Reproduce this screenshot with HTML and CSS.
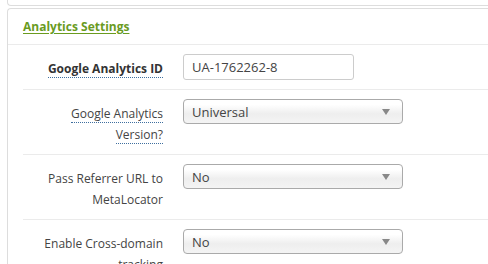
FILE: index.html
```html
<!DOCTYPE html>
<html lang="en">
<head>
  <meta charset="UTF-8">
  <title>Analytics Settings</title>
  <link rel="stylesheet" href="styles.css">
</head>
<body>
  <div class="panel-prev"></div>

  <div class="panel">
    <div class="panel-heading">
      <a class="panel-title" href="#">Analytics Settings</a>
    </div>

    <div class="panel-body">
      <div class="form-row">
        <label class="form-label"><span class="hint strong">Google Analytics ID</span></label>
        <div class="form-control">
          <input type="text" class="text-input" value="UA-1762262-8">
        </div>
      </div>

      <div class="form-row">
        <label class="form-label"><span class="hint">Google Analytics</span><br><span class="hint">Version?</span></label>
        <div class="form-control">
          <div class="select"><span>Universal</span><i class="caret"></i></div>
        </div>
      </div>

      <div class="form-row">
        <label class="form-label">Pass Referrer URL to<br>MetaLocator</label>
        <div class="form-control">
          <div class="select"><span>No</span><i class="caret"></i></div>
        </div>
      </div>

      <div class="form-row">
        <label class="form-label">Enable Cross-domain<br>tracking</label>
        <div class="form-control">
          <div class="select"><span>No</span><i class="caret"></i></div>
        </div>
      </div>
    </div>
  </div>
</body>
</html>
```

FILE: styles.css
```css
:root {
  --border: #dddddd;
  --divider: #ebebeb;
  --green: #6a9b1f;
  --text: #444444;
}

body {
  font-family: 'Open Sans', sans-serif;
  font-size: 13px;
  color: var(--text);
  background: #ffffff;
  margin: 0;
  padding: 0;
  overflow: hidden;
}

.panel-prev {
  height: 5px;
  margin-left: 7px;
  border: 1px solid var(--border);
  border-top: none;
  border-right: none;
  border-radius: 0 0 0 4px;
}

.panel {
  margin: 2px 0 0 7px;
  border: 1px solid var(--border);
  border-right: none;
  border-bottom: none;
  border-radius: 4px 0 0 0;
}

.panel-heading {
  height: 35px;
  padding-left: 15px;
  display: flex;
  align-items: center;
  border-bottom: 1px solid var(--divider);
}

.panel-title {
  color: var(--green);
  font-weight: 700;
  font-size: 12px;
  text-decoration: underline;
  text-underline-offset: 2px;
}

.panel-body {
  padding-left: 15px;
}

.form-row {
  display: flex;
  padding: 9px 0;
  border-bottom: 1px solid var(--divider);
}

.form-label {
  width: 140px;
  padding-top: 4px;
  text-align: right;
  line-height: 21px;
  font-size: 12px;
}

.hint {
  border-bottom: 1px dotted #3f6f9f;
}

.strong {
  font-weight: 700;
  color: #333333;
}

.form-control {
  margin-left: 20px;
}

.text-input {
  box-sizing: border-box;
  width: 171px;
  height: 26px;
  padding: 0 8px;
  border: 1px solid #cccccc;
  border-radius: 3px;
  font-family: inherit;
  font-size: 13px;
  color: var(--text);
}

.select {
  box-sizing: border-box;
  width: 220px;
  height: 25px;
  padding: 0 8px;
  display: flex;
  align-items: center;
  justify-content: space-between;
  border: 1px solid #aaaaaa;
  border-radius: 4px;
  background: linear-gradient(#ffffff 20%, #eeeeee 60%, #f4f4f4);
  color: var(--text);
}

.caret {
  width: 0;
  height: 0;
  margin-right: 4px;
  border-left: 4px solid transparent;
  border-right: 4px solid transparent;
  border-top: 6px solid #888888;
}
```
